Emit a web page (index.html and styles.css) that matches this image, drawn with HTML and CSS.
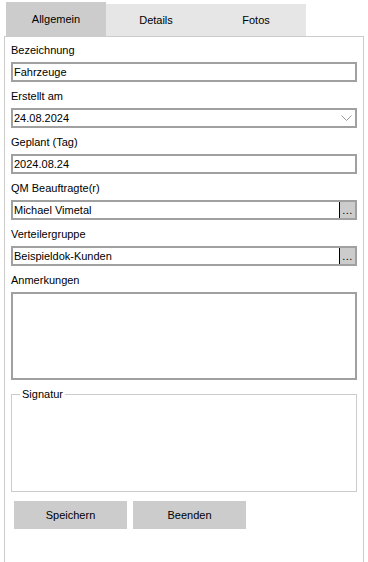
FILE: index.html
```html
<!DOCTYPE html>
<html lang="de">
<head>
  <meta charset="UTF-8">
  <meta name="viewport" content="width=device-width, initial-scale=1.0">
  <title>Allgemein</title>
  <link rel="stylesheet" href="styles.css">
</head>
<body>
  <div class="tabs">
    <div class="tab active">Allgemein</div>
    <div class="tab">Details</div>
    <div class="tab">Fotos</div>
  </div>

  <div class="panel">
    <label>Bezeichnung</label>
    <input type="text" class="field" value="Fahrzeuge">

    <label>Erstellt am</label>
    <div class="date">
      <input type="text" class="field" value="24.08.2024">
      <svg class="chevron" width="11" height="7" viewBox="0 0 11 7">
        <polyline points="0.5,0.5 5.5,5.5 10.5,0.5" fill="none" stroke="#9a9a9a" stroke-width="1"/>
      </svg>
    </div>

    <label>Geplant (Tag)</label>
    <input type="text" class="field" value="2024.08.24">

    <label>QM Beauftragte(r)</label>
    <div class="picker">
      <input type="text" value="Michael Vimetal">
      <button class="dots">...</button>
    </div>

    <label>Verteilergruppe</label>
    <div class="picker">
      <input type="text" value="Beispieldok-Kunden">
      <button class="dots">...</button>
    </div>

    <label>Anmerkungen</label>
    <textarea class="notes"></textarea>

    <fieldset class="signature">
      <legend>Signatur</legend>
      <div class="pad"></div>
    </fieldset>

    <div class="actions">
      <button class="btn">Speichern</button>
      <button class="btn">Beenden</button>
    </div>
  </div>
</body>
</html>
```

FILE: styles.css
```css
html, body {
  height: 100%;
  overflow: hidden;
}

body {
  margin: 0;
  padding: 2px 0 0 4px;
  box-sizing: border-box;
  display: flex;
  flex-direction: column;
  font-family: "Liberation Sans", Arial, sans-serif;
  font-size: 11px;
  color: #000;
  background: #fff;
}

.tabs {
  display: flex;
  align-items: flex-end;
  height: 34px;
  padding-left: 2px;
}

.tab {
  width: 100px;
  height: 32px;
  background: #e6e6e6;
  display: flex;
  align-items: center;
  justify-content: center;
}

.tab.active {
  height: 34px;
  background: #cccccc;
}

.panel {
  flex: 1;
  width: 346px;
  padding: 0 6px;
  border: 1px solid #cccccc;
  border-bottom: none;
}

label {
  display: block;
  line-height: 16px;
  margin: 6px 0 4px;
}

.panel > label:first-child {
  margin-top: 5px;
}

input, textarea, button {
  font-family: inherit;
  font-size: 11px;
  color: #000;
}

.field {
  display: block;
  width: 100%;
  height: 20px;
  box-sizing: border-box;
  border: 2px solid #a0a0a0;
  padding: 0 1px;
  margin: 0;
  outline: none;
  background: #fff;
}

.date {
  position: relative;
}

.chevron {
  position: absolute;
  right: 5px;
  top: 7px;
}

.picker {
  display: flex;
  height: 20px;
  box-sizing: border-box;
  border: 2px solid #a0a0a0;
}

.picker input {
  flex: 1;
  min-width: 0;
  border: none;
  padding: 0 1px;
  margin: 0;
  outline: none;
}

.dots {
  width: 16px;
  padding: 0;
  margin: 0;
  border: none;
  border-left: 1px solid #000;
  background: #cccccc;
  line-height: 12px;
  letter-spacing: 0.5px;
}

.notes {
  display: block;
  width: 100%;
  height: 88px;
  box-sizing: border-box;
  border: 2px solid #a0a0a0;
  margin: 0;
  padding: 0;
  resize: none;
  outline: none;
}

.signature {
  margin: 6px 0 0;
  padding: 0;
  border: 1px solid #cccccc;
  min-width: 0;
}

.signature legend {
  margin-left: 8px;
  padding: 0 2px;
  line-height: 16px;
}

.pad {
  height: 89px;
}

.actions {
  display: flex;
  gap: 6px;
  margin-top: 9px;
  padding-left: 3px;
}

.btn {
  width: 113px;
  height: 28px;
  border: none;
  background: #cccccc;
  padding: 0;
}
```
